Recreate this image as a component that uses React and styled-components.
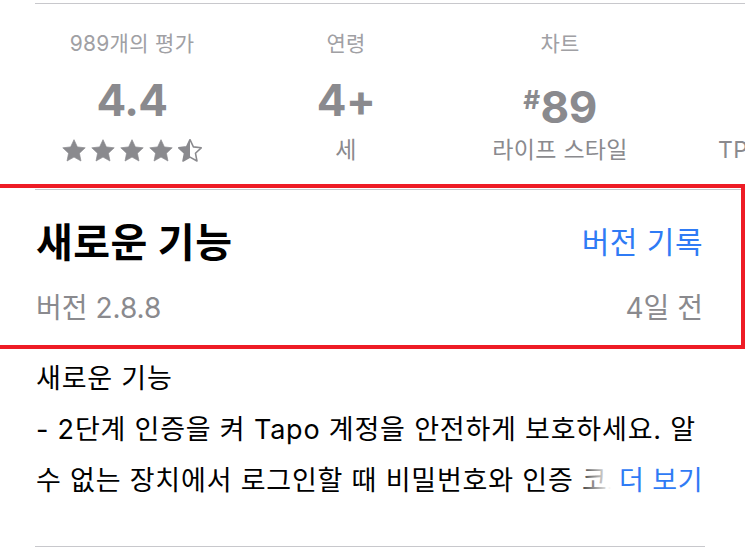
import React from 'react';
import styled, { createGlobalStyle } from 'styled-components';

const FONT = `"Inter", "Noto Sans CJK KR", sans-serif`;
const GRAY = '#8a8a8e';
const LIGHT_GRAY = '#a0a0a4';
const BLUE = '#2f7bf5';
const HAIRLINE = '#c8c8cc';

const GlobalStyle = createGlobalStyle`
  html, body {
    margin: 0;
    padding: 0;
    background: #ffffff;
  }
  body {
    font-family: ${FONT};
    -webkit-font-smoothing: antialiased;
  }
`;

const infoItems = [
  { label: '989개의 평가', value: '4.4', kind: 'rating' },
  { label: '연령', value: '4+', sub: '세' },
  { label: '차트', value: '89', hash: true, sub: '라이프 스타일' },
  { label: '개발자', value: '', sub: 'TP-LINK Corporation', truncate: true },
];

const bodyLines = [
  '새로운 기능',
  '- 2단계 인증을 켜 Tapo 계정을 안전하게 보호하세요. 알',
  '수 없는 장치에서 로그인할 때 비밀번호와 인증 코드를 입력해야 합니다.',
];

const STAR_PATH =
  'M12 1.8l3.05 6.5 7.05.85-5.2 4.85 1.38 7.02L12 17.5l-6.28 3.52 1.38-7.02-5.2-4.85 7.05-.85z';

const Star = ({ fill }) => (
  <StarSvg viewBox="1.2 1.2 21.6 21.6">
    <defs>
      <clipPath id="half-star">
        <rect x="0" y="0" width="12" height="24" />
      </clipPath>
    </defs>
    {fill === 'full' && <path d={STAR_PATH} fill={GRAY} stroke={GRAY} strokeWidth="0.6" strokeLinejoin="round" />}
    {fill === 'half' && (
      <>
        <path d={STAR_PATH} fill={GRAY} clipPath="url(#half-star)" />
        <path d={STAR_PATH} fill="none" stroke={GRAY} strokeWidth="1.4" strokeLinejoin="round" />
      </>
    )}
  </StarSvg>
);

export default function App() {
  return (
    <>
      <GlobalStyle />
      <Page>
        <InfoRow>
          {infoItems.map((item) => (
            <InfoItem key={item.label}>
              <InfoLabel>{item.label}</InfoLabel>
              <InfoValue>
                {item.hash && <Hash>#</Hash>}
                {item.value}
              </InfoValue>
              {item.kind === 'rating' ? (
                <Stars>
                  <Star fill="full" />
                  <Star fill="full" />
                  <Star fill="full" />
                  <Star fill="full" />
                  <Star fill="half" />
                </Stars>
              ) : (
                <InfoSub $truncate={item.truncate}>{item.sub}</InfoSub>
              )}
            </InfoItem>
          ))}
        </InfoRow>

        <Highlight>
          <SectionDivider />
          <TitleRow>
            <Title>새로운 기능</Title>
            <LinkText>버전 기록</LinkText>
          </TitleRow>
          <MetaRow>
            <Meta>버전 2.8.8</Meta>
            <Meta>4일 전</Meta>
          </MetaRow>
        </Highlight>

        <Notes>
          {bodyLines.map((line, i) => (
            <NoteLine key={i}>{line}</NoteLine>
          ))}
          <MoreWrap>
            <MoreLink>더 보기</MoreLink>
          </MoreWrap>
        </Notes>
        <BottomDivider />
      </Page>
    </>
  );
}

const Page = styled.div`
  width: 745px;
  height: 551px;
  overflow: hidden;
  padding-top: 3px;
  box-sizing: border-box;
`;

const InfoRow = styled.div`
  display: flex;
  margin-left: 35px;
  border-top: 1px solid ${HAIRLINE};
  padding: 28px 0 0 0;
  height: 152px;
  white-space: nowrap;
`;

const InfoItem = styled.div`
  flex: 0 0 214px;
  margin-left: -10px;
  margin-right: 10px;
  display: flex;
  flex-direction: column;
  align-items: center;
`;

const InfoLabel = styled.div`
  font-size: 21px;
  line-height: 24px;
  letter-spacing: 0.3px;
  color: ${LIGHT_GRAY};
`;

const InfoValue = styled.div`
  margin-top: 18px;
  height: 52px;
  font-size: 44px;
  line-height: 52px;
  font-weight: 700;
  color: ${GRAY};
  letter-spacing: -0.5px;
`;

const Hash = styled.span`
  font-size: 26px;
  vertical-align: 14px;
  margin-right: 1px;
`;

const InfoSub = styled.div`
  margin-top: 10px;
  max-width: ${(p) => (p.$truncate ? '112px' : 'none')};
  overflow: hidden;
  text-overflow: ellipsis;
  font-size: 23px;
  line-height: 28px;
  letter-spacing: 0.3px;
  color: ${GRAY};
`;

const Stars = styled.div`
  margin-top: 13px;
  display: flex;
  gap: 5px;
`;

const StarSvg = styled.svg`
  width: 24px;
  height: 24px;
  display: block;
`;

const Highlight = styled.section`
  border: 4px solid #ee1c25;
  border-left: 0;
  padding: 0 38px 23px 0;
`;

const SectionDivider = styled.div`
  margin: 1px -38px 0 35px;
  border-top: 1px solid ${HAIRLINE};
`;

const TitleRow = styled.div`
  display: flex;
  justify-content: space-between;
  align-items: center;
  margin-top: 27px;
  padding-left: 36px;
  height: 46px;
`;

const Title = styled.h2`
  margin: 0;
  font-size: 40px;
  font-weight: 700;
  color: #000000;
  letter-spacing: 0.5px;
`;

const LinkText = styled.span`
  font-size: 30px;
  letter-spacing: 0.5px;
  color: ${BLUE};
`;

const MetaRow = styled.div`
  display: flex;
  justify-content: space-between;
  align-items: center;
  margin-top: 27px;
  padding-left: 36px;
  height: 32px;
`;

const Meta = styled.span`
  font-size: 28px;
  color: ${GRAY};
`;

const Notes = styled.div`
  position: relative;
  margin: 4px 42px 0 36px;
`;

const NoteLine = styled.div`
  font-size: 27px;
  line-height: 51px;
  letter-spacing: 0.8px;
  color: #000000;
  white-space: nowrap;
  overflow: hidden;
`;

const MoreWrap = styled.div`
  position: absolute;
  right: 0;
  bottom: 0;
  height: 51px;
  display: flex;
  align-items: center;
  padding-left: 48px;
  background: linear-gradient(to right, rgba(255, 255, 255, 0) 0, #ffffff 40px);
`;

const MoreLink = styled.span`
  font-size: 27px;
  line-height: 51px;
  letter-spacing: 0.5px;
  color: ${BLUE};
`;

const BottomDivider = styled.div`
  margin: 40px 40px 0 35px;
  border-top: 1px solid ${HAIRLINE};
`;
